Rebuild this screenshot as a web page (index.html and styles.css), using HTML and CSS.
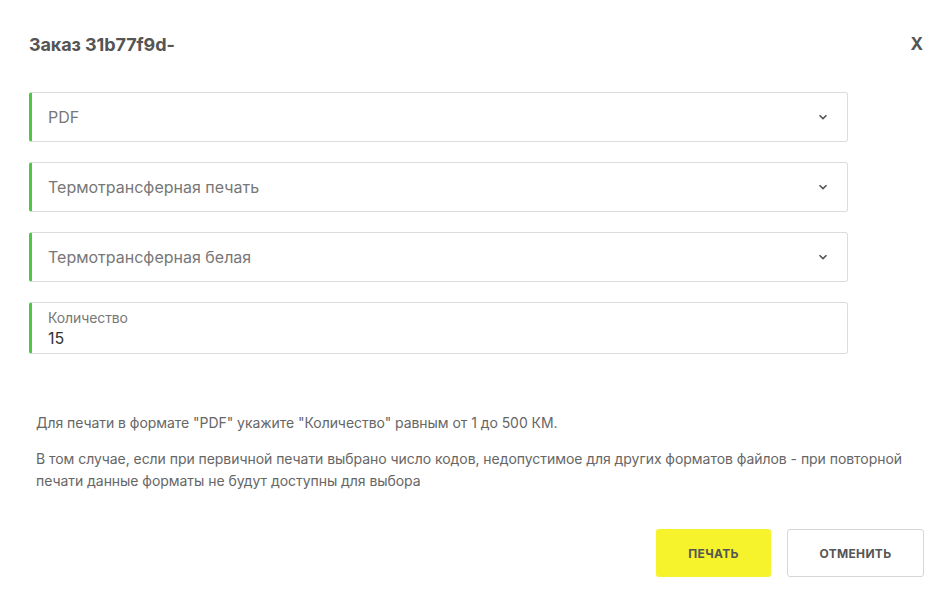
FILE: index.html
```html
<!DOCTYPE html>
<html lang="ru">
<head>
<meta charset="utf-8">
<link rel="stylesheet" href="styles.css">
</head>
<body>
<div class="modal">
  <div class="header">
    <div class="title">Заказ 31b77f9d-</div>
    <div class="close">X</div>
  </div>
  <div class="fields">
    <div class="field select"><span>PDF</span><svg class="chev" width="10" height="6" viewBox="0 0 10 6"><path d="M1.5 1.2 L5 4.6 L8.5 1.2" fill="none" stroke="#555" stroke-width="1.6"/></svg></div>
    <div class="field select"><span>Термотрансферная печать</span><svg class="chev" width="10" height="6" viewBox="0 0 10 6"><path d="M1.5 1.2 L5 4.6 L8.5 1.2" fill="none" stroke="#555" stroke-width="1.6"/></svg></div>
    <div class="field select"><span>Термотрансферная белая</span><svg class="chev" width="10" height="6" viewBox="0 0 10 6"><path d="M1.5 1.2 L5 4.6 L8.5 1.2" fill="none" stroke="#555" stroke-width="1.6"/></svg></div>
    <div class="field input">
      <div class="label">Количество</div>
      <div class="value">15</div>
    </div>
  </div>
  <div class="info">
    <p>Для печати в формате "PDF" укажите "Количество" равным от 1 до 500 КМ.</p>
    <p>В том случае, если при первичной печати выбрано число кодов, недопустимое для других форматов файлов - при повторной печати данные форматы не будут доступны для выбора</p>
  </div>
  <div class="actions">
    <button class="btn primary">Печать</button>
    <button class="btn secondary">Отменить</button>
  </div>
</div>
</body>
</html>
```
FILE: styles.css
```css
html, body {
  margin: 0;
  padding: 0;
  background: #fff;
  font-family: Inter, "Noto Sans", sans-serif;
}
.modal {
  width: 952px;
  box-sizing: border-box;
  padding: 28px 28px 0 29px;
}
.header {
  display: flex;
  justify-content: space-between;
  align-items: center;
  height: 32px;
}
.title {
  font-size: 18px;
  font-weight: 700;
  color: #555;
  letter-spacing: -0.1px;
}
.close {
  font-size: 17px;
  font-weight: 700;
  color: #555;
  margin-right: 1px;
}
.fields {
  margin-top: 32px;
  width: 819px;
  display: flex;
  flex-direction: column;
  gap: 20px;
}
.field {
  box-sizing: border-box;
  border: 1px solid #dcdcdc;
  border-left: 3px solid #4fc646;
  border-radius: 3px;
  padding-left: 16px;
}
.select {
  height: 50px;
  display: flex;
  align-items: center;
  justify-content: space-between;
  padding-right: 19px;
  font-size: 16px;
  color: #777;
}
.chev {
  display: block;
}
.input {
  height: 52px;
  padding-top: 7px;
}
.label {
  font-size: 14px;
  color: #777;
  line-height: 16px;
  letter-spacing: -0.1px;
}
.value {
  font-size: 16px;
  color: #333;
  line-height: 20px;
  margin-top: 2px;
}
.info {
  margin-top: 58px;
  padding-left: 7px;
  font-size: 14px;
  letter-spacing: -0.05px;
  color: #666;
  line-height: 22px;
  width: 880px;
}
.info p {
  margin: 0 0 14px 0;
}
.info p:last-child {
  margin-bottom: 0;
}
.actions {
  margin-top: 37px;
  display: flex;
  justify-content: flex-end;
  gap: 16px;
}
.btn {
  height: 48px;
  border-radius: 3px;
  font-family: Inter, "Noto Sans", sans-serif;
  font-size: 12px;
  font-weight: 700;
  text-transform: uppercase;
  letter-spacing: 0.3px;
  color: #555;
  cursor: pointer;
}
.primary {
  width: 115px;
  background: #f6f22b;
  border: none;
}
.secondary {
  width: 137px;
  background: #fff;
  border: 1px solid #d6d6d6;
}
```
